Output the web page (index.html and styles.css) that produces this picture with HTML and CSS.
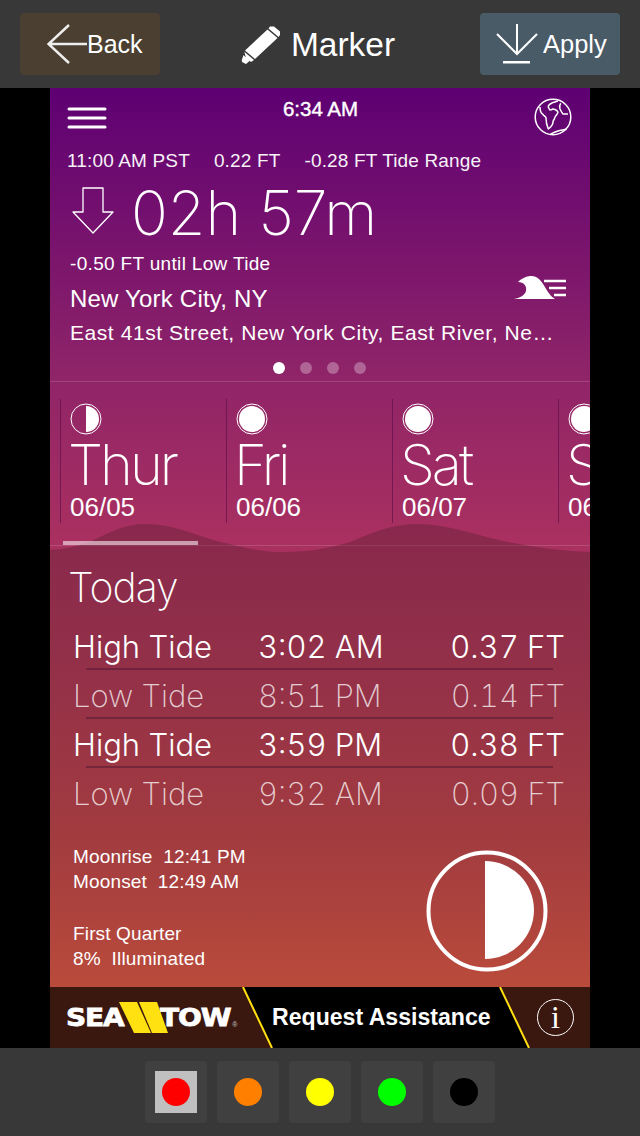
FILE: index.html
```html
<!DOCTYPE html>
<html lang="en">

<head>
    <meta charset="UTF-8">
    <meta name="viewport" content="width=device-width, initial-scale=1.0">
    <title>Marker</title>
    <link rel="stylesheet" href="styles.css">
</head>

<body>
    <!-- top bar -->
    <div class="topBar">
        <div class="topBtn backBtn">
            <svg class="backIcon" width="40" height="40" viewBox="0 0 40 40"><path d="M22 1 L1.5 20 L22 39 M1.5 20 H40" fill="none" stroke="#eee" stroke-width="2.5"/></svg>
            <span>Back</span>
        </div>
        <div class="topTitle">
            <svg width="40" height="40" viewBox="0 0 40 40"><path d="M30 1.5 L34 1.5 L40 6.5 L40 10 L38.5 12 L28.5 3.5 Z M27.5 4.5 L37.5 13 L15 34 L5 25.5 Z M4.3 26.8 L14 35 L11 37 L6 33 Z M3.5 30 L9.5 36 L6 39 L2 37 L1.8 35 Z" fill="#fff"/></svg>
            <span>Marker</span>
        </div>
        <div class="topBtn applyBtn">
            <svg width="42" height="42" viewBox="0 0 42 42"><path d="M1 11 L21 31 L41 11 M21 31 V1" fill="none" stroke="#fff" stroke-width="2"/><rect x="7" y="38" width="27" height="2.5" fill="#fff"/></svg>
            <span>Apply</span>
        </div>
    </div>

    <div class="screen">
        <!-- tide info -->
        <div class="tideInfo">
            <div class="statusRow">
                <svg width="40" height="22" viewBox="0 0 40 22"><path d="M2 2 H38 M2 11 H38 M2 20 H38" stroke="#fff" stroke-width="3" stroke-linecap="round"/></svg>
                <span class="clock">6:34 AM</span>
                <svg width="38" height="38" viewBox="0 0 38 38" fill="none" stroke="#fff" stroke-width="1.5" stroke-linejoin="round"><circle cx="19" cy="19" r="17.8"/><path d="M6 9 C6 12 7 15 8.5 16 C10 18 12 19 12 20 C12 23 13 28 14.3 31 C17 29 19 26 19 24 C19 22 21 21 21 19 C22 17 24 16 24 14 C23 12 20 11 19 11 C17 12 16 12 16 12 C15 11 14 10 14.3 8 C15 6 18 5 19 4.5 C21 4 23 3 24 3"/><path d="M26.7 5.3 C25.5 7 25.5 9 26 11 C27 13 28 15 29 16 C31 16 33 16 34 16"/><path d="M16 36.7 C18 35 21 34 24 33 C27 32 30 32 32.7 31"/></svg>
            </div>
            <div class="tideStats">
                <span>11:00 AM PST</span>
                <span>0.22 FT</span>
                <span>-0.28 FT Tide Range</span>
            </div>
            <div class="countdown">
                <svg width="44" height="50" viewBox="0 0 44 50"><path d="M11 2 H31 V26 H41 L21 47 L1 26 H11 Z" fill="none" stroke="#fff" stroke-width="1.3" stroke-linejoin="round"/></svg>
                <span>02h 57m</span>
            </div>
            <div class="untilTide">-0.50 FT until Low Tide</div>
            <div class="placeRow">
                <span class="city">New York City, NY</span>
                <svg width="52" height="24" viewBox="0 0 52 24"><path d="M0 23 C6 22 11 19 12 15 C13 10 10 6 4 6 C9 1 14 0 18 0 C26 0 30 10 34 16 C36 19 38 21 41 23 Z" fill="#fff"/><path d="M30 5 H52 M35 12 H52 M40 19 H52" stroke="#fff" stroke-width="2.6"/></svg>
            </div>
            <div class="address">East 41st Street, New York City, East River, New York</div>
            <div class="pageDots">
                <i class="on"></i><i></i><i></i><i></i>
            </div>
        </div>

        <!-- day strip -->
        <div class="dayStrip">
            <svg class="hills" width="540" height="30" viewBox="0 0 540 30"><path d="M0 28 C15 27 28 24 40 20 C60 10 75 2 95 2 C125 2 145 14 175 21 C195 26 213 30 233 30 C260 30 280 26 300 20 C320 12 340 2 367 2 C400 2 430 15 463 21 C485 25 510 29 540 30 V30 H0 Z" fill="rgba(80, 30, 40, 0.35)"/></svg>
            <div class="day">
                <svg class="moonIcon" width="34" height="34" viewBox="0 0 34 34"><circle cx="16" cy="17" r="15" fill="none" stroke="#fff" stroke-width="1"/><path d="M16 4 A13 13 0 0 1 16 30 Z" fill="#fff"/></svg>
                <div class="dayName">Thur</div>
                <div class="dayDate">06/05</div>
            </div>
            <div class="day">
                <svg class="moonIcon" width="34" height="34" viewBox="0 0 34 34"><circle cx="16" cy="17" r="15" fill="none" stroke="#fff" stroke-width="1"/><circle cx="16" cy="17" r="13" fill="#fff"/></svg>
                <div class="dayName">Fri</div>
                <div class="dayDate">06/06</div>
            </div>
            <div class="day">
                <svg class="moonIcon" width="34" height="34" viewBox="0 0 34 34"><circle cx="16" cy="17" r="15" fill="none" stroke="#fff" stroke-width="1"/><circle cx="16" cy="17" r="13" fill="#fff"/></svg>
                <div class="dayName">Sat</div>
                <div class="dayDate">06/07</div>
            </div>
            <div class="day">
                <svg class="moonIcon" width="34" height="34" viewBox="0 0 34 34"><circle cx="16" cy="17" r="15" fill="none" stroke="#fff" stroke-width="1"/><circle cx="16" cy="17" r="13" fill="#fff"/></svg>
                <div class="dayName">Sun</div>
                <div class="dayDate">06/08</div>
            </div>
            <div class="tabMark"></div>
        </div>

        <!-- today -->
        <div class="today">
            <div class="todayTitle">Today</div>
            <div class="tideTable">
                <div class="tideRow high"><span>High Tide</span><span>3:02 AM</span><span>0.37 FT</span></div>
                <div class="tideRow low"><span>Low Tide</span><span>8:51 PM</span><span>0.14 FT</span></div>
                <div class="tideRow high"><span>High Tide</span><span>3:59 PM</span><span>0.38 FT</span></div>
                <div class="tideRow low"><span>Low Tide</span><span>9:32 AM</span><span>0.09 FT</span></div>
            </div>
            <div class="moonBlock">
                <div class="moonText">
                    <p>Moonrise&nbsp; 12:41 PM</p>
                    <p>Moonset&nbsp; 12:49 AM</p>
                    <p class="phase">First Quarter</p>
                    <p>8%&nbsp; Illuminated</p>
                </div>
                <svg class="moonBig" width="122" height="122" viewBox="0 0 122 122"><circle cx="61" cy="61" r="58.5" fill="none" stroke="#fff" stroke-width="4"/><path d="M59 11 A49 49 0 0 1 59 109 Z" fill="#fff"/></svg>
            </div>
        </div>

        <!-- sea tow bar -->
        <div class="assistBar">
            <svg class="assistBg" width="540" height="61" viewBox="0 0 540 61"><path d="M193 0 H450 L479 61 H222 Z" fill="#000"/><path d="M193 0 L222 61 M450 0 L479 61" stroke="#ffdf10" stroke-width="2"/></svg>
            <div class="logo">
                <span class="logoWord">SEA</span>
                <svg width="50" height="31" viewBox="0 0 50 31"><path d="M0 0 H18 L32 31 H15 Z M20 0 H38 L49 31 H33 Z" fill="#ffe010"/></svg>
                <span class="logoWord logoTow">TOW</span>
                <span class="logoReg">®</span>
            </div>
            <div class="assistText">Request Assistance</div>
            <div class="infoBtn">i</div>
        </div>
    </div>

    <!-- marker colours -->
    <div class="toolBar">
        <div class="swatch"><div class="swatchOn"><b class="red"></b></div></div>
        <div class="swatch"><b class="orange"></b></div>
        <div class="swatch"><b class="yellow"></b></div>
        <div class="swatch"><b class="green"></b></div>
        <div class="swatch"><b class="black"></b></div>
    </div>
</body>

</html>
```

FILE: styles.css
```css
* {
    margin: 0;
    padding: 0;
    box-sizing: border-box;
}

body {
    width: 640px;
    height: 1136px;
    overflow: hidden;
    background-color: #000;
    color: #fff;
    font-family: "Liberation Sans", Arial, sans-serif;
}

/* top bar */
.topBar {
    height: 88px;
    padding: 13px 20px;
    background-color: #383838;
    display: flex;
    justify-content: space-between;
}

.topBtn {
    width: 140px;
    height: 62px;
    border-radius: 4px;
    display: flex;
    align-items: center;
    font-size: 25.5px;
}

.backBtn {
    background-color: #4a3f30;
    padding-left: 27px;
    font-size: 25px;
}

.backIcon {
    flex-shrink: 0;
}

.applyBtn {
    background-color: #4a5b68;
    padding-left: 16px;
    gap: 5px;
}

.topTitle {
    display: flex;
    align-items: center;
    gap: 11px;
    margin-right: 5px;
    font-size: 33.5px;
    height: 64px;
}

/* main screen */
.screen {
    width: 540px;
    height: 960px;
    margin: 0 auto;
    display: flex;
    flex-direction: column;
    overflow: hidden;
    background: linear-gradient(#5e0073 0%, #8f2468 30%, #a93060 47%, #ab3f42 78%, #c05038 100%);
}

.tideInfo {
    height: 294px;
    padding: 10px 18px 0 17px;
    border-bottom: 1px solid rgba(255, 255, 255, 0.15);
}

.statusRow {
    display: flex;
    justify-content: space-between;
    align-items: flex-start;
    height: 52px;
}

.statusRow svg:first-child {
    margin-top: 9px;
}

.clock {
    font-size: 20.5px;
    line-height: 22px;
    -webkit-text-stroke: 0.4px #fff;
}

.tideStats {
    display: flex;
    gap: 24px;
    font-size: 19px;
    line-height: 21px;
    letter-spacing: 0.15px;
    opacity: 0.95;
}

.countdown {
    display: flex;
    align-items: center;
    gap: 15px;
    height: 78px;
    padding-left: 5px;
    margin-top: 3px;
    font-family: "Inter", sans-serif;
    font-weight: 150;
    font-size: 61px;
}

.countdown svg {
    margin-top: -4px;
}

.untilTide {
    font-size: 19px;
    line-height: 20px;
    letter-spacing: 0.33px;
    padding-left: 3px;
    margin-top: 2px;
}

.placeRow {
    display: flex;
    justify-content: space-between;
    align-items: flex-end;
    padding: 0 6px 0 3px;
    margin-top: 11px;
    height: 28px;
}

.city {
    font-size: 24px;
    line-height: 28px;
    letter-spacing: 0.2px;
}

.placeRow svg {
    margin-bottom: 13px;
}

.address {
    width: 486px;
    margin: 7px 0 0 3px;
    font-size: 21px;
    line-height: 26px;
    letter-spacing: 0.56px;
    white-space: nowrap;
    overflow: hidden;
    text-overflow: ellipsis;
}

.pageDots {
    display: flex;
    justify-content: center;
    gap: 15px;
    margin-top: 16px;
}

.pageDots i {
    width: 12px;
    height: 12px;
    border-radius: 50%;
    background-color: rgba(255, 255, 255, 0.3);
}

.pageDots i.on {
    background-color: #fff;
}

/* days */
.dayStrip {
    position: relative;
    height: 164px;
    padding: 17px 0 0 10px;
    display: flex;
    border-bottom: 1px solid rgba(255, 255, 255, 0.15);
}

.hills {
    position: absolute;
    left: 0;
    top: 140px;
}

.day {
    position: relative;
    flex: 0 0 166px;
    height: 124px;
    padding-left: 9px;
    border-left: 1px solid rgba(80, 10, 70, 0.55);
}

.moonIcon {
    display: block;
    margin-top: 3px;
}

.dayName {
    font-family: "Inter", sans-serif;
    font-weight: 150;
    font-size: 56px;
    line-height: 56px;
    letter-spacing: -3px;
    margin: 1px 0 0 -2px;
    white-space: nowrap;
}

.dayDate {
    font-size: 26px;
    line-height: 28px;
    white-space: nowrap;
}

.tabMark {
    position: absolute;
    left: 13px;
    bottom: 0;
    width: 135px;
    height: 4px;
    background-color: rgba(255, 255, 255, 0.55);
}

/* today */
.today {
    flex: 1;
    padding: 18px 25px 0 20px;
    background: linear-gradient(transparent 6px, rgba(80, 30, 40, 0.35) 6px, rgba(80, 30, 40, 0.12) 60%, rgba(80, 30, 40, 0) 100%);
}

.todayTitle {
    font-family: "Inter", sans-serif;
    font-weight: 200;
    font-size: 41px;
    line-height: 46px;
    letter-spacing: -1px;
    margin-left: -2px;
}

.tideTable {
    margin-top: 12px;
    padding-left: 3px;
}

.tideRow {
    height: 49px;
    display: grid;
    grid-template-columns: 185px 1fr auto;
    align-items: center;
    font-family: "Inter", sans-serif;
    font-size: 31px;
    font-variant-numeric: tabular-nums;
    position: relative;
}

.tideRow:not(:last-child)::after {
    content: "";
    position: absolute;
    left: 13px;
    right: 12px;
    bottom: 1px;
    height: 2px;
    background-color: rgba(70, 20, 50, 0.45);
}

.high {
    font-weight: 300;
}

.low {
    font-weight: 200;
    color: rgba(255, 255, 255, 0.75);
}

.moonBlock {
    display: flex;
    justify-content: space-between;
    margin-top: 19px;
    padding: 0 17px 0 3px;
}

.moonBig {
    margin-top: 13px;
}

.moonText {
    font-size: 19px;
    line-height: 25px;
    letter-spacing: 0.15px;
    padding-top: 7px;
}

.phase {
    margin-top: 27px;
}

/* assistance bar */
.assistBar {
    position: relative;
    height: 61px;
    flex-shrink: 0;
    background-color: #3a1810;
    display: flex;
    align-items: center;
}

.assistBg {
    position: absolute;
    left: 0;
    top: 0;
}

.logo {
    position: relative;
    width: 222px;
    padding-left: 16px;
    display: flex;
    align-items: center;
}

.logo svg {
    flex-shrink: 0;
    position: relative;
    z-index: 1;
    margin-left: 2px;
}

.logoWord {
    display: inline-block;
    font-family: "DejaVu Sans", sans-serif;
    font-weight: bold;
    font-size: 25px;
    letter-spacing: -1px;
    -webkit-text-stroke: 0.8px #fff;
    transform: scaleX(1.12);
    transform-origin: left center;
}

.logoTow {
    margin-left: -9px;
}

.logoReg {
    font-size: 7px;
    color: #ccc;
    margin: 14px 0 0 9px;
}

.assistText {
    position: relative;
    width: 265px;
    font-size: 23.1px;
    font-weight: bold;
}

.infoBtn {
    position: relative;
    width: 37px;
    height: 37px;
    border: 1.5px solid #fff;
    border-radius: 50%;
    text-align: center;
    font-family: "Liberation Serif", serif;
    font-size: 32px;
    line-height: 34px;
}

/* marker colours */
.toolBar {
    height: 88px;
    background-color: #383838;
    display: flex;
    justify-content: center;
    align-items: center;
    gap: 10px;
}

.swatch {
    width: 62px;
    height: 62px;
    border-radius: 4px;
    background-color: #404040;
    display: flex;
    align-items: center;
    justify-content: center;
}

.swatchOn {
    width: 42px;
    height: 42px;
    background-color: #c0c0c0;
    display: flex;
    align-items: center;
    justify-content: center;
}

.swatch b {
    width: 28px;
    height: 28px;
    border-radius: 50%;
}

.red { background-color: #ff0000; }
.orange { background-color: #ff8000; }
.yellow { background-color: #ffff00; }
.green { background-color: #00ff00; }
.black { background-color: #000; }
```
